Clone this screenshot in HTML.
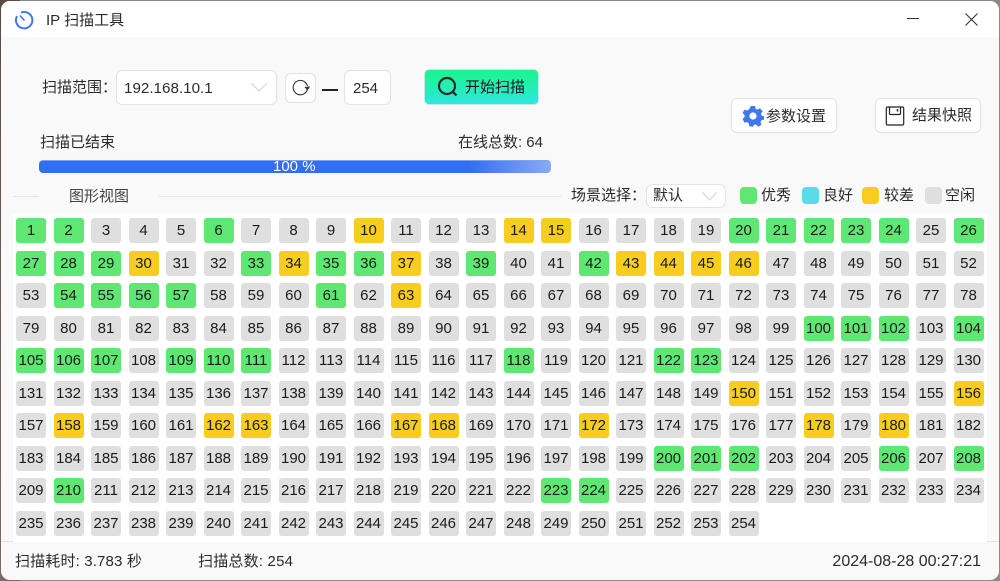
<!DOCTYPE html>
<html lang="zh"><head><meta charset="utf-8"><title>IP 扫描工具</title>
<style>
*{box-sizing:border-box}
html,body{margin:0;padding:0;width:1000px;height:581px;overflow:hidden;background:#8a8a8a}
body{font-family:"Liberation Sans","Noto Sans CJK SC",sans-serif;font-size:15px;color:#2b2b2b;position:relative}
.bgl{position:absolute;left:0;top:0;width:20px;height:100%;background:linear-gradient(#5d4a44,#7a6a66)}
.win{position:absolute;left:1px;top:1px;width:998px;height:579px;background:#f9f9f9;border-radius:9px;overflow:hidden}
.tb{position:absolute;left:0;top:0;width:100%;height:36px;background:#fff}
.a{position:absolute;white-space:nowrap}
.box{position:absolute;background:#fff;border:1px solid #e3e3e3;border-radius:6px}
.grid{position:absolute;left:12px;top:213px;width:974px;height:328px;background:#fff}
.cells{position:absolute;left:3px;top:4px;display:grid;grid-template-columns:repeat(26,37.5px);grid-auto-rows:32.5px}
.cells b{display:block;width:30px;height:25px;line-height:26px;text-align:center;font-weight:400;font-size:15px;color:#1b1b1b;background:#dfdfdf;border-radius:3px}
.cells b.g{background:#5ee873}
.cells b.y{background:#f9cd1f}
.sw{position:absolute;width:17px;height:17px;border-radius:4px;top:186px}
.line{position:absolute;height:1px;background:#e3e3e3;top:195px}
</style></head><body>
<div class="bgl"></div>
<div class="win">
<div class="tb"></div>
<svg class="a" style="left:13px;top:9px" width="21" height="21" viewBox="0 0 21 21" fill="none" stroke="#3f78ee" stroke-width="2"><path d="M7 2.6A8.2 8.2 0 1 1 3 6.2"/><path d="M6 5.5L10.5 10.5" stroke-width="1.6"/></svg>
<div class="a" style="left:45px;top:11px;line-height:18px">IP 扫描工具</div>
<div class="a" style="left:906px;top:17px;width:12px;height:1px;background:#333"></div>
<svg class="a" style="left:964px;top:12px" width="13" height="13" viewBox="0 0 13 13" stroke="#333" stroke-width="1.1"><path d="M.5.5L12.5 12.5M12.5.5L.5 12.5"/></svg>

<div class="a" style="left:41px;top:78px;line-height:18px">扫描范围：</div>
<div class="box" style="left:115px;top:69px;width:161px;height:35px"></div>
<div class="a" style="left:123px;top:79px;font-size:15.2px;line-height:18px">192.168.10.1</div>
<svg class="a" style="left:249px;top:81px" width="18" height="11" viewBox="0 0 18 11" fill="none" stroke="#d8d8d8" stroke-width="1.2"><path d="M1 1L9 9L17 1"/></svg>
<div class="box" style="left:284px;top:72px;width:31px;height:30px"></div>
<svg class="a" style="left:290px;top:77px" width="19" height="19" viewBox="0 0 19 19" fill="none" stroke="#333" stroke-width="1.1"><path d="M16.5 10.5A7.2 7.2 0 1 1 13 3.400"/><path d="M13 3.400Q15.500 5 16.500 8"/><path d="M14 9L16.500 11.500L18.500 8.500" fill="#333"/></svg>
<div class="a" style="left:321px;top:88px;width:16px;height:2px;background:#222"></div>
<div class="box" style="left:343px;top:69px;width:47px;height:35px"></div>
<div class="a" style="left:352px;top:79px;line-height:18px">254</div>
<div class="a" style="left:423px;top:68px;width:115px;height:36px;border-radius:5px;border:1.500px solid #bfeee0;background:linear-gradient(#1cf58a,#2ee6e0)"></div>
<svg class="a" style="left:436px;top:75px" width="22" height="22" viewBox="0 0 22 22" fill="none" stroke="#1d2b2b" stroke-width="2.200"><circle cx="10" cy="10" r="8"/><path d="M16 16L19.500 19.500"/></svg>
<div class="a" style="left:464px;top:78px;line-height:18px;color:#1a1a1a">开始扫描</div>

<div class="box" style="left:730px;top:97px;width:106px;height:35px"></div>
<svg class="a" style="left:741px;top:104px" width="22" height="22" viewBox="0 0 22 22"><path fill="#3f78ee" d="M9 1h4l.6 2.800 1.800.8L18 3.200l2.600 3-1.600 2.400.5 1.900 2.500 1 0 3-2.600.9-.9 1.800 1 2.600-3.200 1.900-1.900-2-2-.2-1.600 2.200-3.600-.6-.4-2.900-1.600-1.100-2.800.5L.6 14l2-2-.1-2L.6 8l1.800-3.200 2.800.7 1.700-1.100z"/><circle cx="11" cy="11" r="3.600" fill="#fff"/></svg>
<div class="a" style="left:765px;top:107px;line-height:18px">参数设置</div>
<div class="box" style="left:874px;top:97px;width:106px;height:35px"></div>
<svg class="a" style="left:884px;top:105px" width="20" height="20" viewBox="0 0 20 20" fill="none" stroke="#222" stroke-width="1.200"><path d="M2.500 1h15a1.200 1.200 0 0 1 1.200 1.200v15.600a1.200 1.200 0 0 1-1.200 1.200H2.500a1.200 1.200 0 0 1-1.200-1.200V2.200A1.200 1.200 0 0 1 2.500 1z"/><path d="M4.500 1v6.500q0 1 1 1h9q1 0 1-1V1"/><path d="M12.500 3v2.500" stroke-width="1.500"/></svg>
<div class="a" style="left:911px;top:106px;line-height:18px">结果快照</div>

<div class="a" style="left:39px;top:133px;line-height:18px">扫描已结束</div>
<div class="a" style="right:456px;top:133px;line-height:18px">在线总数: 64</div>
<div class="a" style="left:38px;top:159px;width:512px;height:13px;border-radius:4px;background:linear-gradient(90deg,#336ef0 0,#336ef0 84%,#8aabf4 100%);border-top:1px solid #7ea3f4"></div>
<div class="a" style="left:272px;top:157px;color:#fff;line-height:18px">100 %</div>

<div class="line" style="left:13px;width:25px"></div>
<div class="a" style="left:68px;top:187px;line-height:18px;color:#444">图形视图</div>
<div class="line" style="left:158px;width:402px"></div>
<div class="a" style="left:570px;top:186px;line-height:18px">场景选择：</div>
<div class="box" style="left:645px;top:183px;width:80px;height:24px;border-radius:7px"></div>
<div class="a" style="left:652px;top:186px;line-height:18px">默认</div>
<svg class="a" style="left:700px;top:190px" width="17" height="11" viewBox="0 0 17 11" fill="none" stroke="#d8d8d8" stroke-width="1.200"><path d="M1 1L8.500 9L16 1"/></svg>
<div class="sw" style="left:739px;background:#5ee873"></div>
<div class="a" style="left:760px;top:186px;line-height:18px">优秀</div>
<div class="sw" style="left:801px;background:#5adbe9"></div>
<div class="a" style="left:822px;top:186px;line-height:18px">良好</div>
<div class="sw" style="left:861px;background:#f9cd1f"></div>
<div class="a" style="left:883px;top:186px;line-height:18px">较差</div>
<div class="sw" style="left:924px;background:#dfdfdf"></div>
<div class="a" style="left:944px;top:186px;line-height:18px">空闲</div>

<div class="line" style="left:0;width:12px;top:540px"></div>
<div class="line" style="left:986px;width:12px;top:540px"></div>
<div class="grid"><div class="cells">
<b class="g">1</b><b class="g">2</b><b>3</b><b>4</b><b>5</b><b class="g">6</b><b>7</b><b>8</b><b>9</b><b class="y">10</b><b>11</b><b>12</b><b>13</b><b class="y">14</b><b class="y">15</b><b>16</b><b>17</b><b>18</b><b>19</b><b class="g">20</b><b class="g">21</b><b class="g">22</b><b class="g">23</b><b class="g">24</b><b>25</b><b class="g">26</b>
<b class="g">27</b><b class="g">28</b><b class="g">29</b><b class="y">30</b><b>31</b><b>32</b><b class="g">33</b><b class="y">34</b><b class="g">35</b><b class="g">36</b><b class="y">37</b><b>38</b><b class="g">39</b><b>40</b><b>41</b><b class="g">42</b><b class="y">43</b><b class="y">44</b><b class="y">45</b><b class="y">46</b><b>47</b><b>48</b><b>49</b><b>50</b><b>51</b><b>52</b>
<b>53</b><b class="g">54</b><b class="g">55</b><b class="g">56</b><b class="g">57</b><b>58</b><b>59</b><b>60</b><b class="g">61</b><b>62</b><b class="y">63</b><b>64</b><b>65</b><b>66</b><b>67</b><b>68</b><b>69</b><b>70</b><b>71</b><b>72</b><b>73</b><b>74</b><b>75</b><b>76</b><b>77</b><b>78</b>
<b>79</b><b>80</b><b>81</b><b>82</b><b>83</b><b>84</b><b>85</b><b>86</b><b>87</b><b>88</b><b>89</b><b>90</b><b>91</b><b>92</b><b>93</b><b>94</b><b>95</b><b>96</b><b>97</b><b>98</b><b>99</b><b class="g">100</b><b class="g">101</b><b class="g">102</b><b>103</b><b class="g">104</b>
<b class="g">105</b><b class="g">106</b><b class="g">107</b><b>108</b><b class="g">109</b><b class="g">110</b><b class="g">111</b><b>112</b><b>113</b><b>114</b><b>115</b><b>116</b><b>117</b><b class="g">118</b><b>119</b><b>120</b><b>121</b><b class="g">122</b><b class="g">123</b><b>124</b><b>125</b><b>126</b><b>127</b><b>128</b><b>129</b><b>130</b>
<b>131</b><b>132</b><b>133</b><b>134</b><b>135</b><b>136</b><b>137</b><b>138</b><b>139</b><b>140</b><b>141</b><b>142</b><b>143</b><b>144</b><b>145</b><b>146</b><b>147</b><b>148</b><b>149</b><b class="y">150</b><b>151</b><b>152</b><b>153</b><b>154</b><b>155</b><b class="y">156</b>
<b>157</b><b class="y">158</b><b>159</b><b>160</b><b>161</b><b class="y">162</b><b class="y">163</b><b>164</b><b>165</b><b>166</b><b class="y">167</b><b class="y">168</b><b>169</b><b>170</b><b>171</b><b class="y">172</b><b>173</b><b>174</b><b>175</b><b>176</b><b>177</b><b class="y">178</b><b>179</b><b class="y">180</b><b>181</b><b>182</b>
<b>183</b><b>184</b><b>185</b><b>186</b><b>187</b><b>188</b><b>189</b><b>190</b><b>191</b><b>192</b><b>193</b><b>194</b><b>195</b><b>196</b><b>197</b><b>198</b><b>199</b><b class="g">200</b><b class="g">201</b><b class="g">202</b><b>203</b><b>204</b><b>205</b><b class="g">206</b><b>207</b><b class="g">208</b>
<b>209</b><b class="g">210</b><b>211</b><b>212</b><b>213</b><b>214</b><b>215</b><b>216</b><b>217</b><b>218</b><b>219</b><b>220</b><b>221</b><b>222</b><b class="g">223</b><b class="g">224</b><b>225</b><b>226</b><b>227</b><b>228</b><b>229</b><b>230</b><b>231</b><b>232</b><b>233</b><b>234</b>
<b>235</b><b>236</b><b>237</b><b>238</b><b>239</b><b>240</b><b>241</b><b>242</b><b>243</b><b>244</b><b>245</b><b>246</b><b>247</b><b>248</b><b>249</b><b>250</b><b>251</b><b>252</b><b>253</b><b>254</b>
</div></div>

<div class="a" style="left:14px;top:552px;line-height:18px;letter-spacing:.15px">扫描耗时: 3.783 秒</div>
<div class="a" style="left:197px;top:552px;line-height:18px;letter-spacing:.2px">扫描总数: 254</div>
<div class="a" style="right:18px;top:552px;line-height:18px;font-size:16px">2024-08-28 00:27:21</div>
</div>
</body></html>
